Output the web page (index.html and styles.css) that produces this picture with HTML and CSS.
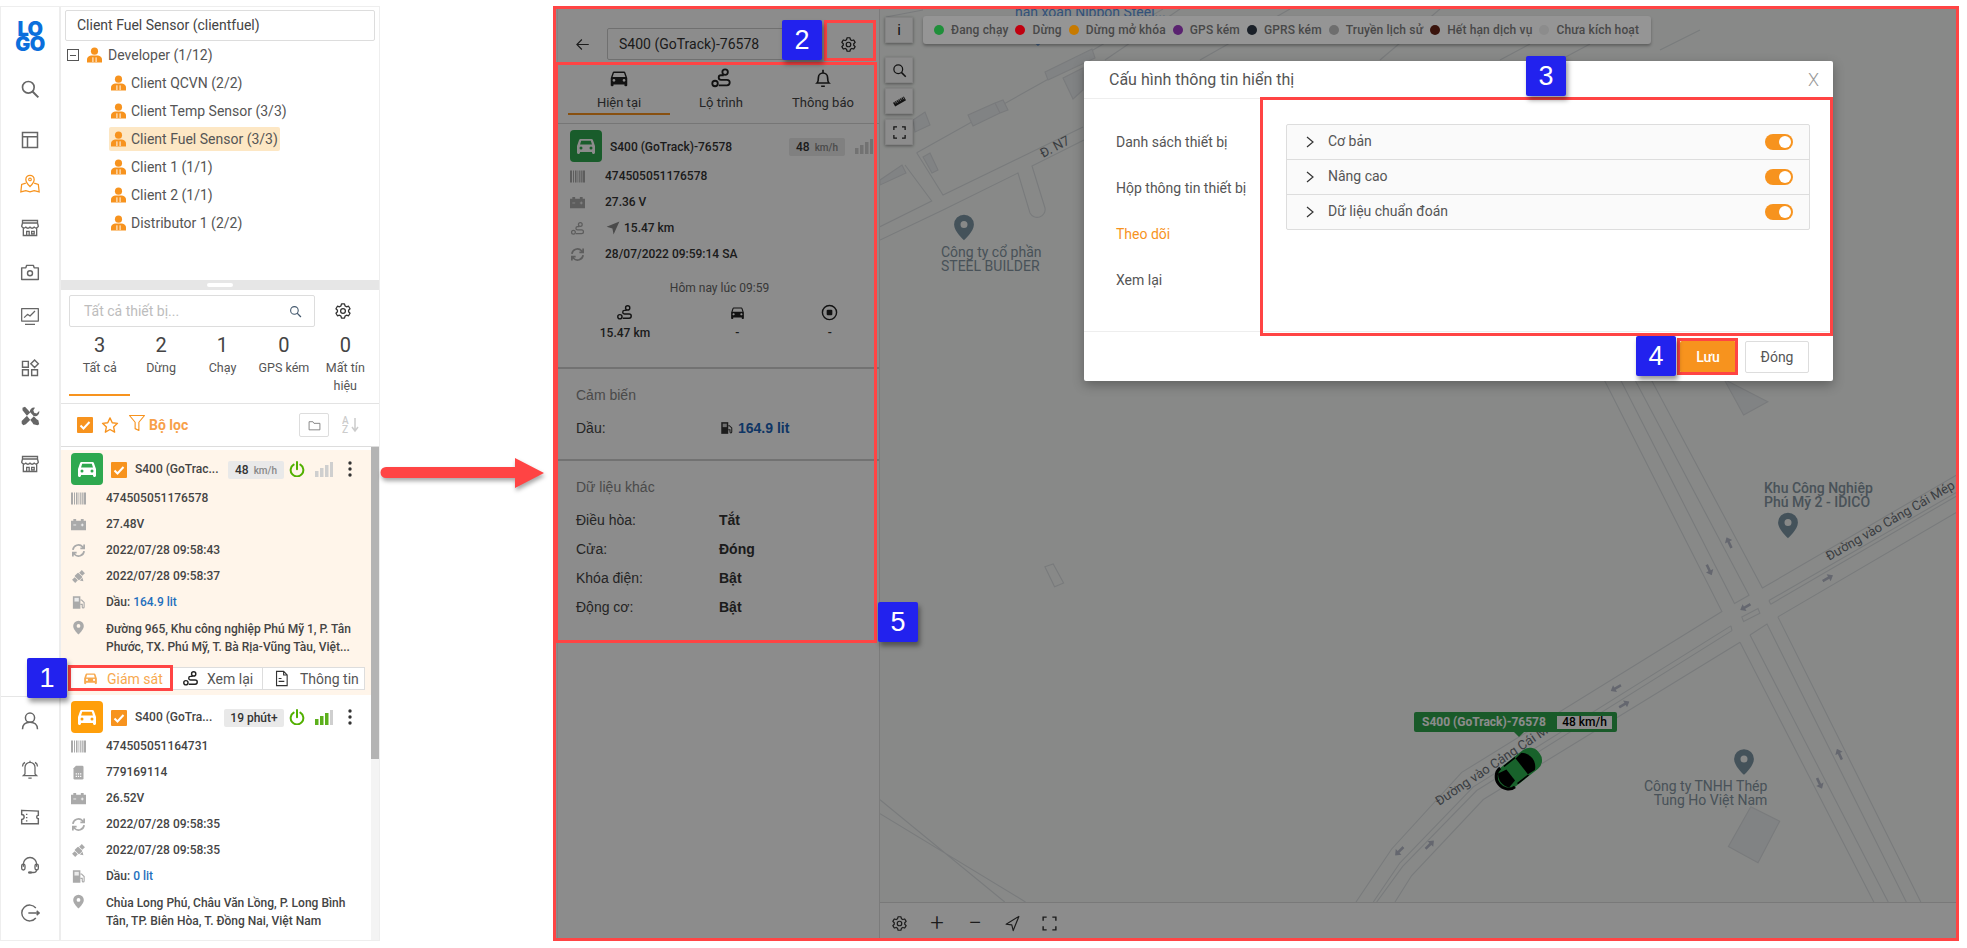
FILE: index.html
```html
<!DOCTYPE html>
<html lang="vi">
<head>
<meta charset="utf-8">
<title>Cấu hình thông tin hiển thị</title>
<link rel="stylesheet" href="styles.css">
</head>
<body>
<svg class="sprite" xmlns="http://www.w3.org/2000/svg">
  <symbol id="search" viewBox="0 0 24 24"><circle cx="10" cy="10" r="7" fill="none" stroke="currentColor" stroke-width="2"/><path d="M15 15l7 7" fill="none" stroke="currentColor" stroke-width="2.4"/></symbol>
  <symbol id="panel" viewBox="0 0 24 24"><path d="M3 3h18v18H3zM3 8h18M9 8v13" fill="none" stroke="currentColor" stroke-width="1.8"/></symbol>
  <symbol id="mapnav" viewBox="0 0 24 24"><path d="M12 1.500a5 5 0 0 0-5 5c0 3.500 5 8.500 5 8.500s5-5 5-8.500a5 5 0 0 0-5-5z" fill="none" stroke="currentColor" stroke-width="1.5"/><circle cx="12" cy="6.500" r="1.600" fill="none" stroke="currentColor" stroke-width="1.3"/><path d="M7 11l-5 1.500L1 21.500l6-1.500 5 1.500 5-1.500 6 1.500-1-9L17 11" fill="none" stroke="currentColor" stroke-width="1.5"/></symbol>
  <symbol id="store" viewBox="0 0 24 24"><path d="M3 3h18v3H3zM3 6l-1 4a3 3 0 0 0 5 1 3 3 0 0 0 5 0 3 3 0 0 0 5 0 3 3 0 0 0 5-1l-1-4M4 12v9h16v-9M8 21v-5h3v5M14 16h3v3h-3z" fill="none" stroke="currentColor" stroke-width="1.6"/></symbol>
  <symbol id="camera" viewBox="0 0 24 24"><path d="M2 7h5l1-3h8l1 3h5v14H2z" fill="none" stroke="currentColor" stroke-width="1.7" stroke-linejoin="round"/><circle cx="12" cy="13.500" r="3" fill="none" stroke="currentColor" stroke-width="1.7"/></symbol>
  <symbol id="chart" viewBox="0 0 24 24"><path d="M2 3h20v15H2zM6 22h12M5 14l4-4 3 2 6-6" fill="none" stroke="currentColor" stroke-width="1.5" stroke-linejoin="round"/></symbol>
  <symbol id="apps" viewBox="0 0 24 24"><path d="M3 4h7v7H3zM3 14h7v7H3zM14 14h7v7h-7zM17.500 2.500l4.500 4.500-4.500 4.500L13 7z" fill="none" stroke="currentColor" stroke-width="1.7"/></symbol>
  <symbol id="tools" viewBox="0 0 24 24"><path d="M3 2l3-1 14 15 2 1 1 5-2 1-5-1-1-2L3 5z M18 2a5 5 0 0 0-6 6L2 18v3l2 2 3-1 10-10a5 5 0 0 0 6-6l-3 3-3-1-1-3z" fill="currentColor"/></symbol>
  <symbol id="user" viewBox="0 0 24 24"><circle cx="12" cy="8" r="5.500" fill="none" stroke="currentColor" stroke-width="1.8"/><path d="M3 22c0-6 4-8.500 9-8.500s9 2.500 9 8.500" fill="none" stroke="currentColor" stroke-width="1.8"/></symbol>
  <symbol id="alarm" viewBox="0 0 24 24"><path d="M6 18V10a6 6 0 0 1 12 0v8l2 2H4zM10 23h4M12 2v2M3 9c0-2 1-4 3-5M21 9c0-2-1-4-3-5" fill="none" stroke="currentColor" stroke-width="1.5"/></symbol>
  <symbol id="ticket" viewBox="0 0 24 24"><path d="M2 4l20 1v5a2 2 0 0 0 0 4v6H2v-5a3 3 0 0 0 0-6zM8 8v1.500M8 12v1.500M8 16v1.500" fill="none" stroke="currentColor" stroke-width="1.7"/></symbol>
  <symbol id="headset" viewBox="0 0 24 24"><path d="M4 14v-3a8 8 0 0 1 16 0v3M20 17a4 4 0 0 1-4 4h-3" fill="none" stroke="currentColor" stroke-width="1.6"/><rect x="2" y="11" width="4" height="7" rx="2" fill="none" stroke="currentColor" stroke-width="1.6"/><rect x="18" y="11" width="4" height="7" rx="2" fill="none" stroke="currentColor" stroke-width="1.6"/><ellipse cx="12" cy="21" rx="2.500" ry="1.500" fill="currentColor"/></symbol>
  <symbol id="logout" viewBox="0 0 24 24"><path d="M19 6a9.500 9.500 0 1 0 0 12M10 12h13M20 9.500l3 2.500-3 2.500" fill="none" stroke="currentColor" stroke-width="1.7"/></symbol>
  <symbol id="gear" viewBox="0 0 24 24"><path d="M10 2.500h4l.7 2.700 2 1.200 2.700-.8 2 3.400-2 2v2l2 2-2 3.400-2.700-.8-2 1.200-.7 2.700h-4l-.7-2.700-2-1.200-2.700.8-2-3.400 2-2v-2l-2-2 2-3.400 2.700.8 2-1.200z" fill="none" stroke="currentColor" stroke-width="1.7" stroke-linejoin="round"/><circle cx="12" cy="12" r="3.200" fill="none" stroke="currentColor" stroke-width="1.7"/></symbol>
  <symbol id="car" viewBox="0 0 24 24"><path d="M18.920 6.010C18.720 5.420 18.160 5 17.500 5h-11c-.66 0-1.210.42-1.420 1.010L3 12v8c0 .55.45 1 1 1h1c.55 0 1-.45 1-1v-1h12v1c0 .55.45 1 1 1h1c.55 0 1-.45 1-1v-8l-2.080-5.990zM6.500 16c-.83 0-1.500-.67-1.500-1.500S5.670 13 6.500 13s1.500.67 1.500 1.500S7.330 16 6.500 16zm11 0c-.83 0-1.500-.67-1.500-1.500s.67-1.500 1.500-1.500 1.500.67 1.500 1.500-.67 1.500-1.500 1.500zM5 11l1.500-4.500h11L19 11H5z" fill="currentColor"/></symbol>
  <symbol id="carfill" viewBox="0 0 24 24"><path d="M18.920 6.010C18.720 5.420 18.160 5 17.500 5h-11c-.66 0-1.210.42-1.420 1.010L3 12v6.500c0 .83.67 1.500 1.500 1.500S6 19.330 6 18.500V18h12v.5c0 .83.67 1.500 1.500 1.500s1.500-.67 1.500-1.500V12z" fill="currentColor"/><circle cx="7" cy="14" r="1.500" class="car-hole"/><circle cx="17" cy="14" r="1.500" class="car-hole"/><path d="M6 10.500l1.200-3.800h9.600l1.200 3.800z" class="car-hole"/></symbol>
  <symbol id="route" viewBox="0 0 24 24"><circle cx="5.500" cy="18" r="3" fill="none" stroke="currentColor" stroke-width="2"/><circle cx="16.500" cy="5.500" r="3" fill="none" stroke="currentColor" stroke-width="2"/><path d="M9.500 20h9a3 3 0 0 0 0-6H12a2.500 2.500 0 0 1 0-5h3" fill="none" stroke="currentColor" stroke-width="2"/></symbol>
  <symbol id="bell" viewBox="0 0 24 24"><path d="M5.500 17.500c1.500-1.500 1.500-3 1.500-6a5 5 0 0 1 10 0c0 3 0 4.500 1.500 6zM10 21h4M12 3v3" fill="none" stroke="currentColor" stroke-width="1.8"/></symbol>
  <symbol id="barcode" viewBox="0 0 15 12"><path d="M0 0h2v12H0zM3 0h1v12H3zM5 0h1.500v12H5zM7.500 0h.8v12h-.8zM9.200 0h1.200v12H9.200zM11 0h.8v12H11zM12.500 0H15v12h-2.500z" fill="currentColor"/></symbol>
  <symbol id="battery" viewBox="0 0 16 12"><path d="M0 2h2.500V0h3v2h5V0h3v2H16v10H0z" fill="currentColor"/><path d="M2.500 6.500h3M10.500 6.500h3M12 5v3" stroke="#fff" stroke-width="1" fill="none" opacity=".8"/></symbol>
  <symbol id="refresh" viewBox="0 0 24 24"><path d="M3 11a9 9 0 0 1 15.500-5L21 8.500M21 2.500v6h-6M21 13a9 9 0 0 1-15.500 5L3 15.500M3 21.500v-6h6" fill="none" stroke="currentColor" stroke-width="2.8"/></symbol>
  <symbol id="sat" viewBox="0 0 24 24"><g transform="rotate(-45 12 12)" fill="currentColor"><rect x="8" y="7" width="8" height="10" rx="1"/><rect x="1" y="8.500" width="6" height="7"/><rect x="17" y="8.500" width="6" height="7"/><path d="M9 18h6l-3 5z"/></g></symbol>
  <symbol id="fuel" viewBox="0 0 24 24"><path d="M3 2h12v20H3z" fill="currentColor"/><path d="M5.500 4.500h7v6h-7z" fill="#fff" opacity=".75"/><path d="M15 8h2l4 4v7a1.500 1.500 0 0 1-3 0v-4h-3" fill="none" stroke="currentColor" stroke-width="1.8"/></symbol>
  <symbol id="sim" viewBox="0 0 24 24"><path d="M8 1h10a2 2 0 0 1 2 2v18a2 2 0 0 1-2 2H6a2 2 0 0 1-2-2V5z" fill="currentColor"/><path d="M7.500 13h2v2h-2zM11 13h2v2h-2zM14.500 13h2v2h-2zM7.500 17h2v2h-2zM11 17h2v2h-2zM14.500 17h2v2h-2z" fill="#fff"/></symbol>
  <symbol id="pin" viewBox="0 0 24 24"><path fill-rule="evenodd" d="M12 1a8.500 8.500 0 0 0-8.500 8.500C3.500 15.500 12 23 12 23s8.500-7.500 8.500-13.500A8.500 8.500 0 0 0 12 1zm0 11.500a3 3 0 1 1 0-6 3 3 0 0 1 0 6z" fill="currentColor"/></symbol>
  <symbol id="power" viewBox="0 0 24 24"><path d="M7 5.500a9.500 9.500 0 1 0 10 0M12 1.500v11" fill="none" stroke="currentColor" stroke-width="3" stroke-linecap="round"/></symbol>
  <symbol id="dots" viewBox="0 0 6 16"><circle cx="3" cy="2" r="1.700" fill="currentColor"/><circle cx="3" cy="8" r="1.700" fill="currentColor"/><circle cx="3" cy="14" r="1.700" fill="currentColor"/></symbol>
  <symbol id="doc" viewBox="0 0 24 24"><path d="M5 2h10l5 5v15H5zM15 2v5h5M8 12h4M8 16h8" fill="none" stroke="currentColor" stroke-width="1.6"/></symbol>
  <symbol id="star" viewBox="0 0 24 24"><path d="M12 2.500l3 6.500 7 .8-5.200 4.800 1.400 7L12 18l-6.200 3.600 1.400-7L2 9.800 9 9z" fill="none" stroke="currentColor" stroke-width="1.8" stroke-linejoin="round"/></symbol>
  <symbol id="funnel" viewBox="0 0 24 24"><path d="M2 2h20l-7.500 9v11l-5-2.500V11z" fill="none" stroke="currentColor" stroke-width="1.5" stroke-linejoin="round"/></symbol>
  <symbol id="folder" viewBox="0 0 24 24"><path d="M2 5h7l2 3h11v12H2z" fill="none" stroke="currentColor" stroke-width="1.6"/></symbol>
  <symbol id="person" viewBox="0 0 16 16"><circle cx="8" cy="3.900" r="3.800" fill="currentColor"/><path d="M0 16v-3.500C0 10 3 8.500 5 8.500h6c2 0 5 1.500 5 4V16z" fill="currentColor"/><path d="M6.300 10.500v5M9.700 10.500v5" stroke="#fff" stroke-width="1"/></symbol>
  <symbol id="arrowleft" viewBox="0 0 24 24"><path d="M22 12H3M11 4l-8 8 8 8" fill="none" stroke="currentColor" stroke-width="1.8"/></symbol>
  <symbol id="nav" viewBox="0 0 24 24"><path d="M23 1L1 10l10 3 2 10z" fill="currentColor"/></symbol>
  <symbol id="navline" viewBox="0 0 24 24"><path d="M21 2L3 13l8 1 2 8z" fill="none" stroke="currentColor" stroke-width="1.6" stroke-linejoin="round"/></symbol>
  <symbol id="record" viewBox="0 0 24 24"><circle cx="12" cy="12" r="10" fill="none" stroke="currentColor" stroke-width="2"/><rect x="8" y="8" width="8" height="8" rx="1.500" fill="currentColor"/></symbol>
  <symbol id="full" viewBox="0 0 24 24"><path d="M3 8V3h5M16 3h5v5M21 16v5h-5M8 21H3v-5" fill="none" stroke="currentColor" stroke-width="2"/></symbol>
  <symbol id="ruler" viewBox="0 0 24 24"><g transform="rotate(-30 12 12)"><rect x="2" y="8.500" width="20" height="7" fill="currentColor"/><path d="M5 8.500v3M8 8.500v4M11 8.500v3M14 8.500v4M17 8.500v3M20 8.500v4" stroke="#fff" stroke-width="1"/></g></symbol>
  <symbol id="sig0" viewBox="0 0 18 15"><path d="M0 9h3.500v6H0zM5 6h3.500v9H5zM10 3h3.500v12H10zM15 0h3v15h-3z" fill="#cfcfcf"/></symbol>
  <symbol id="sig3" viewBox="0 0 18 15"><path d="M0 9h3.500v6H0zM5 6h3.500v9H5zM10 3h3.500v12H10z" fill="#5cb01c"/><path d="M15 0h3v15h-3z" fill="#cfcfcf"/></symbol>
  <symbol id="check" viewBox="0 0 16 16"><path d="M3.500 8.500l3 3 6-6.500" fill="none" stroke="#fff" stroke-width="2"/></symbol>
  <symbol id="chev" viewBox="0 0 8 12"><path d="M1 1l6 5-6 5" fill="none" stroke="currentColor" stroke-width="1.2"/></symbol>
  <symbol id="roadarrow" viewBox="0 0 12 12"><path d="M6 0l4 5H7.300v7H4.700V5H2z" fill="#b8bccb"/></symbol>
</svg>

<div class="page">
  <section class="left">
    <nav class="rail">
      <div class="rail-logo">LO<br>GO</div>
      <div class="rail-item"><svg class="rail-ic"><use href="#search"/></svg></div>
      <div class="rail-item mt7"><svg class="rail-ic"><use href="#panel"/></svg></div>
      <div class="rail-item active"><svg class="rail-ic"><use href="#mapnav"/></svg></div>
      <div class="rail-item"><svg class="rail-ic"><use href="#store"/></svg></div>
      <div class="rail-item"><svg class="rail-ic"><use href="#camera"/></svg></div>
      <div class="rail-item"><svg class="rail-ic"><use href="#chart"/></svg></div>
      <div class="rail-item mt8"><svg class="rail-ic"><use href="#apps"/></svg></div>
      <div class="rail-item mt4"><svg class="rail-ic"><use href="#tools"/></svg></div>
      <div class="rail-item mt4"><svg class="rail-ic"><use href="#store"/></svg></div>
      <div class="rail-bottom">
        <div class="rail-low"><svg class="rail-ic"><use href="#user"/></svg></div>
        <div class="rail-low"><svg class="rail-ic"><use href="#alarm"/></svg></div>
        <div class="rail-low"><svg class="rail-ic"><use href="#ticket"/></svg></div>
        <div class="rail-low"><svg class="rail-ic"><use href="#headset"/></svg></div>
        <div class="rail-low"><svg class="rail-ic"><use href="#logout"/></svg></div>
      </div>
    </nav>
    <div class="main">
      <div class="tree">
        <div class="tree-select">Client Fuel Sensor (clientfuel)</div>
        <div class="tree-root"><span class="minus"></span><svg class="person"><use href="#person"/></svg><span>Developer (1/12)</span></div>
        <div class="tree-row"><span class="tree-node"><svg class="person"><use href="#person"/></svg>Client QCVN (2/2)</span></div>
        <div class="tree-row"><span class="tree-node"><svg class="person"><use href="#person"/></svg>Client Temp Sensor (3/3)</span></div>
        <div class="tree-row"><span class="tree-node selected"><svg class="person"><use href="#person"/></svg>Client Fuel Sensor (3/3)</span></div>
        <div class="tree-row"><span class="tree-node"><svg class="person"><use href="#person"/></svg>Client 1 (1/1)</span></div>
        <div class="tree-row"><span class="tree-node"><svg class="person"><use href="#person"/></svg>Client 2 (1/1)</span></div>
        <div class="tree-row"><span class="tree-node"><svg class="person"><use href="#person"/></svg>Distributor 1 (2/2)</span></div>
      </div>
      <div class="splitter"><span class="grip"></span></div>
      <div class="search-row">
        <div class="search-box"><span>Tất cả thiết bị...</span><svg class="search-ic"><use href="#search"/></svg></div>
        <svg class="search-gear"><use href="#gear"/></svg>
      </div>
      <div class="status-tabs">
        <div class="status on"><b>3</b><span>Tất cả</span></div>
        <div class="status"><b>2</b><span>Dừng</span></div>
        <div class="status"><b>1</b><span>Chạy</span></div>
        <div class="status"><b>0</b><span>GPS kém</span></div>
        <div class="status"><b>0</b><span>Mất tín hiệu</span></div>
      </div>
      <div class="filter-row">
        <span class="cb"><svg><use href="#check"/></svg></span>
        <svg class="star"><use href="#star"/></svg>
        <svg class="funnel"><use href="#funnel"/></svg>
        <span class="filter-label">Bộ lọc</span>
        <span class="folder-btn"><svg><use href="#folder"/></svg></span>
        <svg class="sort" viewBox="0 0 18 18"><text x="0" y="8" class="sort-t">A</text><text x="0" y="17" class="sort-t">Z</text><path d="M13 2v13M10 11l3 4 3-4" fill="none" stroke="#ccc" stroke-width="1.5"/></svg>
      </div>
      <div class="list">
        <div class="cards">
          <article class="card sel">
            <div class="card-head">
              <span class="veh green"><svg><use href="#carfill"/></svg></span>
              <span class="cb"><svg><use href="#check"/></svg></span>
              <span class="veh-name">S400 (GoTrac...</span>
              <span class="speed"><b>48</b><i>km/h</i></span>
              <svg class="power"><use href="#power"/></svg>
              <svg class="signal"><use href="#sig0"/></svg>
              <svg class="dots"><use href="#dots"/></svg>
            </div>
            <div class="row"><svg class="ric"><use href="#barcode"/></svg><span>474505051176578</span></div>
            <div class="row"><svg class="ric"><use href="#battery"/></svg><span>27.48V</span></div>
            <div class="row"><svg class="ric"><use href="#refresh"/></svg><span>2022/07/28 09:58:43</span></div>
            <div class="row"><svg class="ric"><use href="#sat"/></svg><span>2022/07/28 09:58:37</span></div>
            <div class="row"><svg class="ric"><use href="#fuel"/></svg><span>Dầu: <em>164.9 lit</em></span></div>
            <div class="row addr"><svg class="ric"><use href="#pin"/></svg><span>Đường 965, Khu công nghiệp Phú Mỹ 1, P. Tân Phước, TX. Phú Mỹ, T. Bà Rịa-Vũng Tàu, Việt...</span></div>
            <div class="actions">
              <span class="act a1"><svg><use href="#carfill"/></svg>Giám sát</span>
              <span class="act a2"><svg><use href="#route"/></svg>Xem lại</span>
              <span class="act a3"><svg><use href="#doc"/></svg>Thông tin</span>
            </div>
          </article>
          <article class="card second">
            <div class="card-head">
              <span class="veh orange"><svg><use href="#carfill"/></svg></span>
              <span class="cb"><svg><use href="#check"/></svg></span>
              <span class="veh-name">S400 (GoTra...</span>
              <span class="speed wide"><b>19 phút+</b></span>
              <svg class="power"><use href="#power"/></svg>
              <svg class="signal"><use href="#sig3"/></svg>
              <svg class="dots"><use href="#dots"/></svg>
            </div>
            <div class="row"><svg class="ric"><use href="#barcode"/></svg><span>474505051164731</span></div>
            <div class="row"><svg class="ric"><use href="#sim"/></svg><span>779169114</span></div>
            <div class="row"><svg class="ric"><use href="#battery"/></svg><span>26.52V</span></div>
            <div class="row"><svg class="ric"><use href="#refresh"/></svg><span>2022/07/28 09:58:35</span></div>
            <div class="row"><svg class="ric"><use href="#sat"/></svg><span>2022/07/28 09:58:35</span></div>
            <div class="row"><svg class="ric"><use href="#fuel"/></svg><span>Dầu: <em>0 lit</em></span></div>
            <div class="row addr"><svg class="ric"><use href="#pin"/></svg><span>Chùa Long Phú, Châu Văn Lồng, P. Long Bình Tân, TP. Biên Hòa, T. Đồng Nai, Việt Nam</span></div>
          </article>
        </div>
        <div class="scroll"><span class="thumb"></span></div>
      </div>
    </div>
  </section>

  <section class="shot">
    <aside class="panel">
      <header class="panel-head">
        <svg class="back"><use href="#arrowleft"/></svg>
        <div class="dev-input">S400 (GoTrack)-76578</div>
        <svg class="panel-gear"><use href="#gear"/></svg>
      </header>
      <div class="panel-tabs">
        <div class="ptab on"><svg><use href="#car"/></svg><span>Hiện tại</span></div>
        <div class="ptab"><svg><use href="#route"/></svg><span>Lộ trình</span></div>
        <div class="ptab"><svg><use href="#bell"/></svg><span>Thông báo</span></div>
      </div>
      <div class="pdev-head">
        <span class="veh green"><svg><use href="#carfill"/></svg></span>
        <span class="pdev-name">S400 (GoTrack)-76578</span>
        <span class="speed"><b>48</b><i>km/h</i></span>
        <svg class="signal"><use href="#sig0"/></svg>
      </div>
      <div class="prow"><svg class="ric"><use href="#barcode"/></svg><span>474505051176578</span></div>
      <div class="prow"><svg class="ric"><use href="#battery"/></svg><span>27.36 V</span></div>
      <div class="prow"><svg class="ric"><use href="#route"/></svg><svg class="pnav"><use href="#nav"/></svg><span>15.47 km</span></div>
      <div class="prow"><svg class="ric"><use href="#refresh"/></svg><span>28/07/2022 09:59:14 SA</span></div>
      <div class="today">Hôm nay lúc 09:59</div>
      <div class="stats">
        <div class="stat s1"><svg><use href="#route"/></svg><b>15.47 km</b></div>
        <div class="stat s2"><svg><use href="#car"/></svg><b>-</b></div>
        <div class="stat s3"><svg><use href="#record"/></svg><b>-</b></div>
      </div>
      <div class="psec s-sensor">
        <h4>Cảm biến</h4>
        <div class="kv"><span>Dầu:</span><b class="fuelv"><svg><use href="#fuel"/></svg>164.9 lit</b></div>
      </div>
      <div class="psec s-other">
        <h4>Dữ liệu khác</h4>
        <div class="kv"><span>Điều hòa:</span><b>Tắt</b></div>
        <div class="kv"><span>Cửa:</span><b>Đóng</b></div>
        <div class="kv"><span>Khóa điện:</span><b>Bật</b></div>
        <div class="kv"><span>Động cơ:</span><b>Bật</b></div>
      </div>
    </aside>
    <div class="mapwrap">
      <div class="canvas">
        <svg class="mapsvg" viewBox="880 9 1076 893" xmlns="http://www.w3.org/2000/svg">
          <g class="road">
            <path d="M1604.300 380L1721.900 611.500L1461.700 772.400L1391.700 849L1356 902"/>
            <path d="M1620.600 380L1734.500 603.500L1749 595.200L1635 380"/>
            <path d="M1651.400 380L1762.400 588L1957 474.800"/>
            <path d="M1730.900 625.900L1473.300 786.900L1400 862.800L1373.300 902M1732 630.600L1476.700 790.500L1402.700 866.400L1376.700 902M1730.900 625.900L1732 630.600"/>
            <path d="M1768.900 600.600L1957 492.100M1770.700 604.200L1957 495.700M1768.900 600.600L1770.700 604.200"/>
            <path d="M1740 642.200L1483.300 799.500L1411.700 875.500L1395 902M1740 642.200L1873.800 902"/>
            <path d="M1750 635L1767 624.100L1906.300 902M1750 635L1888.200 902"/>
            <path d="M1777.900 616.900L1957 512M1777.900 616.900L1920.800 902"/>
            <path d="M1741.800 616.900L1758 608.600L1759.900 613.300L1743.600 621.600z"/>
            <path d="M1750.800 806.800L1779.700 821.200L1758 862.800L1728.400 846.500zM1725.500 380L1767.800 401.700L1743.600 415.100L1725 381" class="bld"/>
            <path d="M880 799.700L1004.700 902M880 813.600L1025.500 902M1044.900 566.800L1053.200 564L1063.600 583L1054.600 586.700z"/>
            <path d="M916.700 152.700L943 195L1083 127"/>
            <path d="M880 240L943 210L1018 173L1030 213a8 8 0 0 0 15-5L1032 166L1084 140"/>
            <path d="M880 226.700L931.700 201L905 165"/>
            <path d="M916.700 152.700L1046.700 80L1093 50L1163 9"/>
            <path d="M886 17L923 10M1105 60L1180 9M1200 60L1290 9M1380 60L1440 9M1500 60L1530 44M1560 60L1590 44M1660 50L1700 30"/>
            <path d="M968 115L995 103L1000 113L973 126zM995 103L1003 100L1008 110L1000 113zM1045 72L1092 49L1095 58L1048 80zM1063 78L1083 68L1083 90L1073 99zM913 120L925 112L930 125L915 132zM923 157L930 153L938 170L932 173zM880 180L902 165L906 173L880 185z" class="bld"/>
          </g>
          <g>
            <use href="#roadarrow" x="-6" y="-6" width="12" height="12" transform="translate(1729 542.700) rotate(-25)"/>
            <use href="#roadarrow" x="-6" y="-6" width="12" height="12" transform="translate(1709.200 569.900) rotate(155)"/>
            <use href="#roadarrow" x="-6" y="-6" width="12" height="12" transform="translate(1745.400 607.100) rotate(-120)"/>
            <use href="#roadarrow" x="-6" y="-6" width="12" height="12" transform="translate(1827.800 578.200) rotate(60)"/>
            <use href="#roadarrow" x="-6" y="-6" width="12" height="12" transform="translate(1615.900 688.100) rotate(-120)"/>
            <use href="#roadarrow" x="-6" y="-6" width="12" height="12" transform="translate(1624.200 704.400) rotate(60)"/>
            <use href="#roadarrow" x="-6" y="-6" width="12" height="12" transform="translate(1839.400 754.300) rotate(-25)"/>
            <use href="#roadarrow" x="-6" y="-6" width="12" height="12" transform="translate(1819.500 783.300) rotate(155)"/>
            <use href="#roadarrow" x="-6" y="-6" width="12" height="12" transform="translate(1429.700 844.700) rotate(45)"/>
            <use href="#roadarrow" x="-6" y="-6" width="12" height="12" transform="translate(1399.300 851.200) rotate(-135)"/>
          </g>
          <text class="rd" transform="translate(1829 561) rotate(-30)">Đường vào Cảng Cái Mép</text>
          <text class="rd" transform="translate(1439 806) rotate(-33.800)">Đường vào Cảng Cái M</text>
          <text class="rd" transform="translate(1043 158) rotate(-28)">Đ. N7</text>
          <use href="#pin" class="pinuse" x="950" y="212" width="28" height="31"/>
          <use href="#pin" class="pinuse" x="1774" y="510" width="28" height="31"/>
          <use href="#pin" class="pinuse" x="1730" y="746" width="28" height="32"/>
          <use href="#pin" class="pinblue" x="1027" y="22" width="22" height="28"/>
          <text class="poi poi-blue" x="1015" y="17">han xoan Nibbon Steel...</text>
          <text class="poi" x="941" y="257">Công ty cổ phần</text>
          <text class="poi" x="941" y="271">STEEL BUILDER</text>
          <text class="poi mid" x="1764" y="493">Khu Công Nghiệp</text>
          <text class="poi mid" x="1764" y="507">Phú Mỹ 2 - IDICO</text>
          <text class="poi end" x="1767.400" y="791">Công ty TNHH Thép</text>
          <text class="poi end" x="1767.400" y="805">Tung Ho Việt Nam</text>
          <g transform="translate(1518.600 768.800) rotate(-38)">
            <rect x="-25" y="-12" width="51" height="24" rx="11" fill="#2db24f"/>
            <path d="M-14 -12A11 12 0 0 0 -14 12" fill="none" stroke="#000" stroke-width="3"/>
            <path d="M-19 -9l9 2v14l-9 2a14 14 0 0 1 0-18z" fill="#000"/>
            <path d="M4 -10l8 -1a14 14 0 0 1 0 22l-8 -1z" fill="#000"/>
            <path d="M-10 -11L4 -11M-10 11L4 11" stroke="#000" stroke-width="1.5"/>
          </g>
        </svg>
        <div class="vlabel"><span>S400 (GoTrack)-76578</span><b>48 km/h</b></div>
        <div class="map-tools">
          <span class="mt single"><i class="info">i</i></span>
          <span class="mt gap"><svg><use href="#search"/></svg></span>
          <span class="mt"><svg><use href="#ruler"/></svg></span>
          <span class="mt"><svg><use href="#full"/></svg></span>
        </div>
      </div>
      <div class="mapbar">
        <svg><use href="#gear"/></svg>
        <span class="bar-sym">+</span>
        <span class="bar-sym">−</span>
        <svg><use href="#navline"/></svg>
        <svg><use href="#full"/></svg>
      </div>
    </div>
    <div class="backdrop"></div>
    <div class="legend">
      <span class="lg"><i class="c1"></i>Đang chạy</span>
      <span class="lg"><i class="c2"></i>Dừng</span>
      <span class="lg"><i class="c3"></i>Dừng mở khóa</span>
      <span class="lg"><i class="c4"></i>GPS kém</span>
      <span class="lg"><i class="c5"></i>GPRS kém</span>
      <span class="lg"><i class="c6"></i>Truyền lịch sử</span>
      <span class="lg"><i class="c7"></i>Hết hạn dịch vụ</span>
      <span class="lg"><i class="c8"></i>Chưa kích hoạt</span>
    </div>
    <div class="modal">
      <div class="modal-head"><span>Cấu hình thông tin hiển thị</span><span class="close">X</span></div>
      <div class="modal-body">
        <ul class="modal-nav">
          <li>Danh sách thiết bị</li>
          <li>Hộp thông tin thiết bị</li>
          <li class="cur">Theo dõi</li>
          <li>Xem lại</li>
        </ul>
        <div class="accordion">
          <div class="acc"><svg><use href="#chev"/></svg><span>Cơ bản</span><i class="toggle"></i></div>
          <div class="acc"><svg><use href="#chev"/></svg><span>Nâng cao</span><i class="toggle"></i></div>
          <div class="acc"><svg><use href="#chev"/></svg><span>Dữ liệu chuẩn đoán</span><i class="toggle"></i></div>
        </div>
      </div>
      <div class="modal-foot"><span class="btn save">Lưu</span><span class="btn close-btn">Đóng</span></div>
    </div>
  </section>

  <svg class="bigarrow" viewBox="0 0 174 40"><path d="M7 9H136V0L165 15L136 30V20H7a5.500 5.500 0 0 1 0-11z" fill="#ff4444"/></svg>
  <span class="hl h1"></span>
  <span class="hl h2"></span>
  <span class="hl h3"></span>
  <span class="hl h4"></span>
  <span class="hl h5"></span>
  <span class="tag t1">1</span>
  <span class="tag t2">2</span>
  <span class="tag t3">3</span>
  <span class="tag t4">4</span>
  <span class="tag t5">5</span>
</div>
</body>
</html>
```
FILE: styles.css
```css
*{box-sizing:border-box}
html,body{margin:0;padding:0;background:#fff}
body{font-family:Roboto,"Noto Sans",sans-serif;color:#444;width:1967px;height:948px;overflow:hidden}
.sprite{display:none}
svg{display:block}
.car-hole{fill:var(--hole,#fff)}
.page{position:relative;width:1967px;height:948px;display:flex;align-items:flex-start}

/* left column */
.left{width:380px;height:935px;margin-top:6px;border:1px solid #eee;display:flex;flex:none}
.rail{width:60px;flex:none;border-right:2px solid #ededed;display:flex;flex-direction:column;align-items:stretch}
.rail-logo{height:60px;display:flex;flex-direction:column;justify-content:center;text-align:center;font:900 20px/15px Inter,Roboto,sans-serif;color:#0b6fdc;letter-spacing:-.5px}
.rail-item{height:44px;display:flex;align-items:center;justify-content:center;color:#666}
.rail-item.active{color:#f7931e}
.mt7{margin-top:7px}.mt8{margin-top:8px}.mt4{margin-top:4px}
.rail-ic{width:20px;height:20px}
.rail-bottom{margin-top:auto;height:244px;border-top:1px solid #e6e6e6}
.rail-low{height:48px;display:flex;align-items:center;justify-content:center;color:#666}

.main{flex:1;min-width:0;display:flex;flex-direction:column}
.tree{height:273px;padding:3px 4px 0}
.tree-select{height:31px;border:1px solid #ddd;border-radius:2px;font-size:14px;line-height:29px;padding-left:11px;color:#444}
.tree-root{height:28px;display:flex;align-items:center;font-size:14px;color:#555;padding-left:2px}
.minus{width:12px;height:12px;border:1px solid #555;margin-right:8px;display:block;background:linear-gradient(#555,#555) center/6px 1px no-repeat}
.person{width:15px;height:16px;color:#f7931e;margin-right:6px;flex:none}
.tree-row{height:28px;padding-left:44px;display:flex;align-items:center;font-size:14px;color:#555}
.tree-node{display:flex;align-items:center;height:24px;padding:0 2px;border-radius:2px}
.tree-node .person{margin-right:5px}
.tree-node.selected{background:#fde7c4}
.splitter{height:10px;background:#e6e6e6;display:flex;align-items:center;justify-content:center;flex:none}
.grip{width:26px;height:4px;border-radius:2px;background:#fff}
.search-row{display:flex;padding:5px 0 0 8px;align-items:center;flex:none}
.search-box{width:246px;height:32px;border:1px solid #ddd;border-radius:2px;display:flex;align-items:center;justify-content:space-between;padding:0 12px 0 14px;font-size:14px;color:#bdbdbd}
.search-ic{width:13px;height:13px;color:#44596e}
.search-gear{width:18px;height:18px;margin-left:19px;color:#333}
.status-tabs{height:77px;padding:4px 3px 0 8px;display:grid;grid-template-columns:repeat(5,1fr);border-bottom:1px solid #e3e3e3;flex:none}
.status{display:flex;flex-direction:column;align-items:center;text-align:center;height:65px}
.status b{font-weight:400;font-size:20px;line-height:28px;color:#444}
.status span{font-size:12.5px;line-height:18px;color:#555}
.status.on{border-bottom:2px solid #f7931e}
.filter-row{height:43px;display:flex;align-items:center;padding:0 19px 0 16px;border-bottom:1px solid #ddd;flex:none}
.cb{width:16px;height:16px;background:#f7931e;border-radius:1px;display:block;flex:none}
.cb svg{width:16px;height:16px}
.star{width:18px;height:18px;color:#f7931e;margin-left:8px}
.funnel{width:18px;height:18px;color:#f7931e;margin:-4px 0 0 9px}
.filter-label{font-size:14px;font-weight:700;color:#f7a04a;margin-left:3px}
.folder-btn{margin-left:auto;width:30px;height:24px;border:1px solid #ddd;border-radius:2px;display:flex;align-items:center;justify-content:center;color:#777}
.folder-btn svg{width:13px;height:13px}
.sort{width:18px;height:18px;margin-left:13px}
.sort-t{font:500 10px Roboto,sans-serif;fill:#ccc}
.list{flex:1;min-height:0;display:flex;overflow:hidden}
.cards{width:310px;padding-top:3px;flex:none;overflow:hidden}
.scroll{flex:1;background:#f4f4f4}
.thumb{display:block;height:312px;background:#b4b4b4}
.card{padding:3px 0 0 10px}
.card.sel{background:#fff5ea;height:245px}
.card.second{padding-top:6px}
.card-head{height:32px;display:flex;align-items:flex-start}
.veh{width:32px;height:32px;border-radius:4px;display:flex;align-items:center;justify-content:center;color:#fff;flex:none}
.veh svg{width:24px;height:24px}
.veh.green{background:#2ea84f;--hole:#2ea84f}
.veh.orange{background:#ff9f0a;--hole:#ff9f0a}
.card-head .cb{margin:9px 8px 0 8px}
.veh-name{font-size:12px;font-weight:500;color:#444;width:93px;white-space:nowrap;margin-top:9px;flex:none}
.speed{height:18px;width:56px;background:#e9e9e9;border-radius:2px;display:flex;align-items:center;justify-content:center;font-size:12px;white-space:nowrap;margin-top:8px;flex:none;gap:5px}
.speed b{font-weight:500;color:#333}
.speed i{font-style:normal;font-weight:500;font-size:10px;color:#888}
.speed.wide{width:60px;margin-left:-4px}
.power{width:16px;height:16px;color:#52b000;margin:8px 0 0 5px;flex:none}
.signal{width:18px;height:15px;margin:9px 0 0 10px;flex:none}
.dots{width:6px;height:16px;margin:8px 0 0 14px;color:#333;flex:none}
.row{height:26px;display:flex;align-items:center;font-size:12px;font-weight:500;color:#444}
.ric{width:15px;height:15px;color:#aaa;margin-right:20px;flex:none}
.row em{font-style:normal;color:#1f6fbd}
.row.addr{height:auto;align-items:flex-start;padding:5px 10px 0 0;line-height:18px}
.actions{display:flex;margin:11px 0 0 -3px;height:23px;width:297px}
.act{display:flex;align-items:center;border:1px solid #ddd;border-left:0;background:#fff;font-size:14px;color:#555}
.act svg{width:17px;height:17px;margin-right:8px}
.a1{width:105px;padding-left:13px;color:#f7a94f;border-left:1px solid #ddd}
.a2{width:90px;padding-left:9px}
.a2 svg{color:#222}
.a3{width:102px;padding-left:10px}
.a3 svg{color:#333;margin-right:10px}

/* right frame */
.shot{position:absolute;left:553px;top:6px;width:1406px;height:935px;border:3px solid #ff4444;padding-left:1px;display:flex;background:#fff}
.panel{width:323px;flex:none;background:#fff;border-right:1px solid #e0e0e0;overflow:hidden;border-left:1px solid #eee}
.panel-head{height:54px;display:flex;align-items:center;padding:16px 0 0 17px}
.back{width:15px;height:15px;color:#333}
.dev-input{width:178px;height:32px;border:1px solid #ccc;border-radius:2px;margin-left:17px;padding-left:11px;line-height:30px;font-size:14px;color:#333;flex:none}
.panel-gear{width:17px;height:17px;margin-left:55px;color:#222}
.panel-tabs{height:61px;display:grid;grid-template-columns:repeat(3,102px);padding-left:10px;border-bottom:1px solid #d8d8d8}
.ptab{display:flex;flex-direction:column;align-items:center;height:52px;padding-top:4px;font-size:13px;color:#444}
.ptab svg{width:22px;height:22px;color:#222}
.ptab span{margin-top:6px;line-height:16px}
.ptab.on{border-bottom:2px solid #f7931e}
.pdev-head{height:39px;display:flex;padding:6px 0 0 12px}
.pdev-name{font-size:12px;font-weight:500;color:#333;margin:10px 0 0 8px;width:179px;flex:none}
.pdev-head .speed{margin-top:8px}
.prow{height:26px;display:flex;align-items:center;font-size:12px;font-weight:500;color:#333;padding-left:12px}
.pnav{width:14px;height:14px;margin:0 4px 0 1px;color:#888}
.today{font-size:12px;color:#666;text-align:center;margin-top:12px;line-height:18px;padding-left:2px}
.stats{display:flex;height:42px;margin-top:7px}
.stat{display:flex;flex-direction:column;align-items:center;font-size:12px;color:#333}
.stat svg{width:17px;height:17px;color:#222}
.stat b{font-weight:500;line-height:16px;margin-top:4px}
.s1{width:136px}.s2{width:88px;margin-left:2px}.s3{width:100px}
.psec{border-top:2px solid #d0d0d0;font-family:"Liberation Sans",Arial,sans-serif;font-size:14px;color:#444;padding-left:18px}
.psec h4{margin:0;font-size:14px;font-weight:400;color:#888;line-height:18px}
.s-sensor{height:92px;margin-top:21px;padding-top:17px}
.s-sensor h4{margin-bottom:15px}
.s-other{padding-top:17px}
.s-other h4{margin-bottom:15px}
.kv{display:flex;height:29px;line-height:18px;align-items:flex-start}
.kv span{width:143px;flex:none}
.kv b{color:#333;display:flex;align-items:center;gap:4px}
.kv b.fuelv{color:#1a63b8}
.fuelv svg{width:15px;height:14px;color:#333}
.mapwrap{flex:1;min-width:0;display:flex;flex-direction:column;background:#fff}
.canvas{height:893px;position:relative;background:#f7faf7;overflow:hidden}
.mapsvg{width:1076px;height:893px}
.road path{fill:none;stroke:#dcdfe2;stroke-width:1.1}
.road path.bld{fill:#ebeef0;stroke:#dcdfe2}
.rd{font:400 13px Roboto,sans-serif;fill:#6b7077}
.poi{font:400 14px Roboto,sans-serif;fill:#8595a2}
.poi.mid{font-weight:500}
.poi.end{text-anchor:end}
.poi-blue{fill:#5c95e0}
.pinuse{color:#7d95a5}
.pinblue{color:#7aa9e8}
.vlabel{position:absolute;left:534px;top:703px;width:203px;height:20px;background:#2fa54c;border-radius:2px;display:flex;align-items:center;justify-content:space-between;padding:0 5px 0 8px;font:700 12px/1 Roboto,sans-serif;color:#fff}
.vlabel::after{content:"";position:absolute;left:100px;bottom:-5px;border:5px solid transparent;border-bottom:0;border-top-color:#2fa54c}
.vlabel b{background:#fff;color:#000;font-weight:500;height:13px;width:55px;text-align:center;line-height:13px;font-size:12px}
.map-tools{position:absolute;left:5px;top:8px;display:flex;flex-direction:column;gap:5px}
.mt{width:28px;height:26px;background:#fff;border:1px solid #eee;box-shadow:0 1px 3px rgba(0,0,0,.4);display:flex;align-items:center;justify-content:center;color:#222}
.mt svg{width:15px;height:15px}
.mt.gap{margin-top:9px}
.info{font:400 15px Roboto,sans-serif}
.mapbar{flex:1;border-top:1px solid #ddd;background:#fff;display:flex;align-items:center;padding:6px 0 0 11px;gap:20px;color:#333}
.mapbar svg{width:17px;height:17px}
.bar-sym{width:18px;text-align:center;font-size:24px;line-height:17px;font-weight:300}
.backdrop{position:absolute;inset:0;background:rgba(0,0,0,.45)}
.legend{position:absolute;left:367px;top:7px;width:728px;height:28px;background:#959595;border-radius:3px;box-shadow:0 2px 3px rgba(0,0,0,.3);display:flex;align-items:center;gap:7px;padding-left:11px;font-size:12px;font-weight:500;letter-spacing:.15px;color:#484848;white-space:nowrap}
.lg{display:flex;align-items:center;gap:7px}
.lg i{width:10px;height:10px;border-radius:50%;display:block}
.c1{background:#1f8f3a}.c2{background:#c0000f}.c3{background:#c77a00}.c4{background:#5a2270}.c5{background:#1a2028}.c6{background:#6e6e6e}.c7{background:#3a140c}.c8{background:#8c8c8c}
.modal{position:absolute;left:528px;top:52px;width:749px;height:320px;background:#fff;border-radius:2px;box-shadow:0 4px 12px rgba(0,0,0,.3);display:flex;flex-direction:column}
.modal-head{height:38px;border-bottom:1px solid #eee;display:flex;align-items:center;justify-content:space-between;padding:0 14px 0 25px;font-size:16px;color:#555}
.close{font-size:18px;color:#999;font-weight:300}
.modal-body{height:233px;display:flex;border-bottom:1px solid #eee;flex:none}
.modal-nav{list-style:none;margin:0;padding:25px 0 0 32px;width:202px;font-size:14px;color:#555;flex:none}
.modal-nav li{height:46px;line-height:36px}
.modal-nav .cur{color:#f7931e}
.accordion{width:524px;height:106px;margin-top:25px;border:1px solid #ddd;border-radius:2px;background:#fafafa;flex:none;display:flex;flex-direction:column}
.acc{height:35px;display:flex;align-items:center;border-bottom:1px solid #ddd;font-size:14px;color:#555;padding:0 16px 0 19px}
.acc:last-child{border-bottom:0;flex:1}
.acc svg{width:8px;height:12px;flex:none;color:#333;margin-right:14px}
.acc span{flex:1;margin-top:-2px}
.toggle{width:28px;height:16px;border-radius:8px;background:#f7931e;position:relative;display:block}
.toggle::after{content:"";position:absolute;right:2px;top:2px;width:12px;height:12px;border-radius:50%;background:#fff}
.modal-foot{flex:1;display:flex;align-items:flex-start;justify-content:flex-end;padding:9px 24px 0 0;gap:9px}
.btn{height:32px;display:flex;align-items:center;justify-content:center;font-size:14px;border-radius:2px}
.save{width:56px;background:#f7931e;color:#fff;font-weight:500}
.close-btn{width:64px;border:1px solid #ddd;color:#555}

/* annotations */
.bigarrow{position:absolute;left:379px;top:458px;width:174px;height:40px;filter:drop-shadow(1px 3px 2px rgba(0,0,0,.35))}
.hl{position:absolute;border:3px solid #ff4444}
.h1{left:68px;top:665px;width:105px;height:26px}
.h2{left:824px;top:20px;width:52px;height:41px}
.h3{left:1260px;top:97px;width:573px;height:239px}
.h4{left:1677px;top:338px;width:61px;height:37px}
.h5{left:555px;top:62px;width:322px;height:581px}
.tag{position:absolute;width:40px;height:40px;background:#2222ee;border-radius:2px;box-shadow:2px 4px 5px rgba(0,0,0,.4);color:#fff;font:400 27px/40px "Liberation Sans",Arial,sans-serif;text-align:center}
.t1{left:27px;top:658px}
.t2{left:782px;top:20px}
.t3{left:1526px;top:56px}
.t4{left:1636px;top:336px}
.t5{left:878px;top:602px}
```
